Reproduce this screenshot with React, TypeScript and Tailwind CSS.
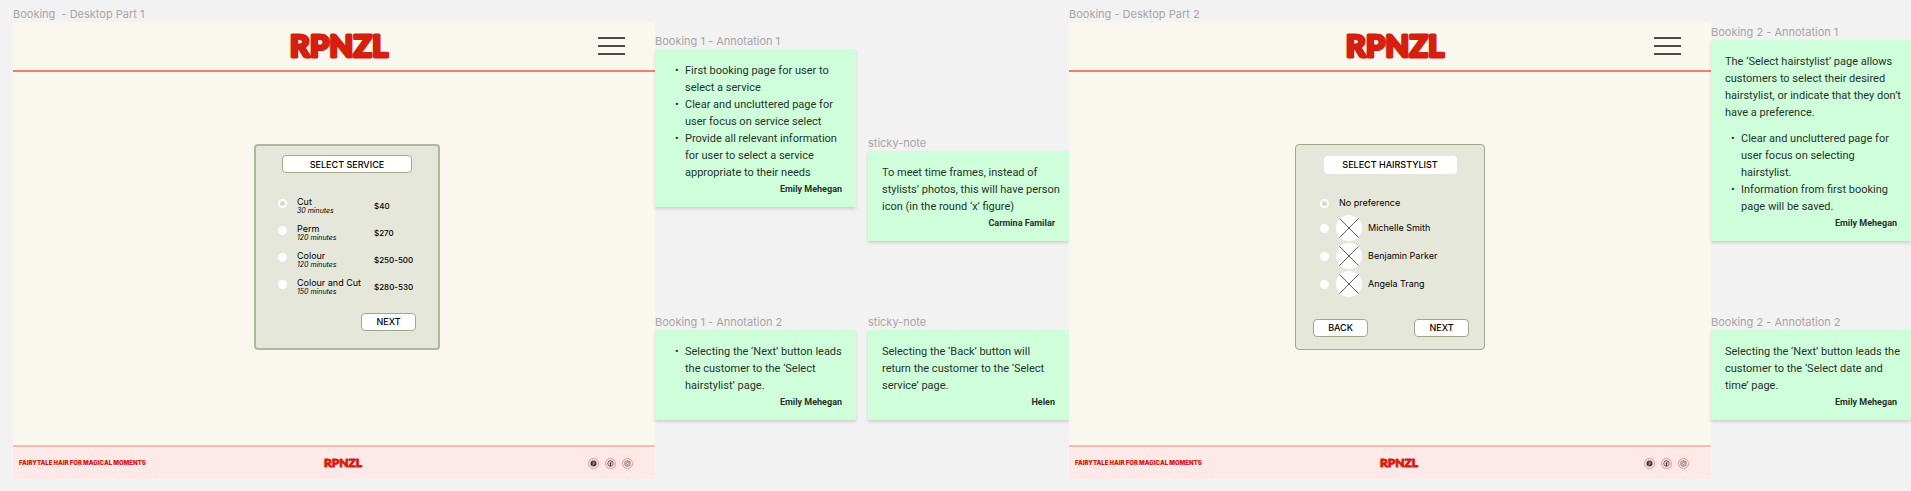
import type { ReactNode } from "react";

function Wordmark() {
  return (
    <svg viewBox="0 0 120 46" className="h-[46px] w-[120px]" role="img" aria-label="RPNZL">
      <text
        x="59"
        y="34"
        textAnchor="middle"
        fill="#d6200f"
        stroke="#d6200f"
        strokeWidth="3"
        strokeLinejoin="round"
        className="font-['Lato',sans-serif] text-[31px] font-black"
      >
        RPNZL
      </text>
    </svg>
  );
}

function SmallWordmark() {
  return (
    <svg viewBox="0 0 50 20" className="h-[20px] w-[50px]" role="img" aria-label="RPNZL">
      <text
        x="25"
        y="14"
        textAnchor="middle"
        fill="#d6200f"
        stroke="#d6200f"
        strokeWidth="1"
        strokeLinejoin="round"
        className="font-['Lato',sans-serif] text-[12px] font-black"
      >
        RPNZL
      </text>
    </svg>
  );
}

function SocialLink({ label, children }: { label: string; children: ReactNode }) {
  return (
    <a href="#" aria-label={label} className="block">
      <svg viewBox="0 0 22 22" className="size-[11px]" fill="none">
        <circle cx="11" cy="11" r="10" stroke="#e9806f" strokeWidth="1.6" />
        {children}
      </svg>
    </a>
  );
}

function Frame({ title, children }: { title: string; children: ReactNode }) {
  return (
    <section className="flex min-w-0 flex-col pt-[6px]">
      <h2 className="text-[11px] leading-4 whitespace-pre text-[#a6a6a6]">{title}</h2>
      <div className="flex flex-col bg-[#faf7ee]">
        <header className="grid h-[50px] grid-cols-[1fr_auto_1fr] items-center border-b-2 border-[#ec8370] pl-3">
          <span />
          <Wordmark />
          <button type="button" aria-label="Menu" className="mr-[30px] justify-self-end">
            <svg viewBox="0 0 27 18" className="h-[18px] w-[27px]" stroke="#111" strokeWidth="1.5">
              <path d="M0 1h27M0 9h27M0 17h27" />
            </svg>
          </button>
        </header>
        <div className="flex h-[373px] justify-center pt-[72px]">{children}</div>
        <footer className="grid h-[34px] grid-cols-[1fr_auto_1fr] items-center border-t-2 border-[#f6bdb0] bg-[#fde9e7]">
          <span className="pl-[6px] text-[6px] leading-4 font-black text-[#d6200f]">
            FAIRYTALE HAIR FOR MAGICAL MOMENTS
          </span>
          <div className="pl-[18px]">
            <SmallWordmark />
          </div>
          <div className="mr-[22px] flex gap-[6px] justify-self-end">
            <SocialLink label="Pinterest">
              <circle cx="11" cy="11" r="6" fill="#3c3232" />
              <path d="M9.5 16l2-7M8.5 11c-1-3 5-4 5-1 0 3-3 3-3 2" stroke="#fde9e7" strokeWidth="0.8" />
            </SocialLink>
            <SocialLink label="Facebook">
              <circle cx="11" cy="11" r="5.5" stroke="#3c3232" strokeWidth="1.6" />
              <path d="M11 16.5v-7q0-2 2.5-2M9 11.5h4" stroke="#3c3232" strokeWidth="1.8" />
            </SocialLink>
            <SocialLink label="Instagram">
              <rect x="6" y="6" width="10" height="10" rx="2.5" stroke="#5a4c4a" strokeWidth="1.5" />
              <circle cx="11" cy="11" r="2.4" stroke="#5a4c4a" strokeWidth="1.2" />
              <circle cx="14" cy="8" r="0.8" fill="#5a4c4a" />
            </SocialLink>
          </div>
        </footer>
      </div>
    </section>
  );
}

function Note({ label, author, children }: { label: string; author: string; children: ReactNode }) {
  return (
    <article>
      <h3 className="text-[11px] leading-4 whitespace-nowrap text-[#a6a6a6]">{label}</h3>
      <div className="bg-[#cfffda] pt-[13px] pr-[6px] pb-[9px] pl-[14px] font-['Roboto',sans-serif] text-[11px] leading-[17px] text-[#26332a] shadow-[0_2px_3px_rgba(0,0,0,0.14)]">
        {children}
        <p className="pr-[8px] text-right text-[9px] leading-[17px] font-bold">{author}</p>
      </div>
    </article>
  );
}

function Bullets({ items }: { items: string[] }) {
  return (
    <ul className="pr-[4px]">
      {items.map((item) => (
        <li key={item} className="flex">
          <span className="w-4 shrink-0 pl-[6px]">•</span>
          <span>{item}</span>
        </li>
      ))}
    </ul>
  );
}

const radioClass =
  "size-[9px] shrink-0 appearance-none rounded-full bg-white checked:border-2 checked:border-white checked:bg-[#d4d6cf]";

const buttonClass =
  "h-[18px] w-[55px] rounded-[4px] border border-[#a3a88a] bg-white text-[9px] leading-4 font-medium";

const services = [
  { name: "Cut", time: "30 minutes", price: "$40" },
  { name: "Perm", time: "120 minutes", price: "$270" },
  { name: "Colour", time: "120 minutes", price: "$250-500" },
  { name: "Colour and Cut", time: "150 minutes", price: "$280-530" },
];

function ServiceCard() {
  return (
    <form className="ml-[26px] flex h-[206px] w-[186px] flex-col rounded-[4px] border-2 border-[#b3b79d] bg-[#e4e7da] text-black">
      <h4 className="mx-auto mt-[9px] h-[18px] w-[130px] rounded-[4px] border border-[#a3a88a] bg-white text-center text-[9px] leading-[17px] font-medium">
        SELECT SERVICE
      </h4>
      <div className="mt-[24px] flex flex-col">
        {services.map((s, i) => (
          <label key={s.name} className="flex h-[27px] pl-[22px]">
            <input type="radio" name="service" defaultChecked={i === 0} className={"mt-[2px] " + radioClass} />
            <span className="ml-[10px] w-[77px] whitespace-nowrap">
              <span className="block text-[9px] leading-[10px]">{s.name}</span>
              <span className="block text-[7px] leading-[8px] italic">{s.time}</span>
            </span>
            <span className="mt-[4px] text-[8px] leading-[10px] font-medium">{s.price}</span>
          </label>
        ))}
      </div>
      <button type="button" className={"mt-[8px] mr-[22px] self-end " + buttonClass}>
        NEXT
      </button>
    </form>
  );
}

const stylists = ["Michelle Smith", "Benjamin Parker", "Angela Trang"];

function StylistCard() {
  return (
    <form className="flex h-[206px] w-[190px] flex-col rounded-[4px] border border-[#a3a88a] bg-[#e4e7da] text-black">
      <h4 className="mx-auto mt-[11px] h-[18px] w-[133px] rounded-[4px] bg-white text-center text-[9px] leading-[18px] font-medium">
        SELECT HAIRSTYLIST
      </h4>
      <label className="mt-[24px] flex h-[10px] items-center gap-[10px] pl-[24px] text-[9px] leading-[10px]">
        <input type="radio" name="stylist" defaultChecked className={radioClass} />
        No preference
      </label>
      <div className="mt-[7px] flex flex-col gap-[2px]">
        {stylists.map((name) => (
          <label key={name} className="flex items-center pl-[24px] text-[9px] leading-[10px]">
            <input type="radio" name="stylist" className={radioClass} />
            <svg viewBox="0 0 26 26" className="mr-[6px] ml-[7px] size-[26px]">
              <circle cx="13" cy="13" r="13" fill="white" />
              <path d="M3.5 3.5l19 19M22.5 3.5l-19 19" stroke="#333" strokeWidth="0.8" />
            </svg>
            {name}
          </label>
        ))}
      </div>
      <div className="mt-[22px] flex justify-between pr-[15px] pl-[17px]">
        <button type="button" className={buttonClass}>
          BACK
        </button>
        <button type="button" className={buttonClass}>
          NEXT
        </button>
      </div>
    </form>
  );
}

export default function App() {
  return (
    <main className="grid min-h-screen grid-cols-[642fr_414fr_642fr_200fr] items-start bg-[#f2f2f2] pl-[13px] font-['Inter',sans-serif]">
      <Frame title="Booking  - Desktop Part 1">
        <ServiceCard />
      </Frame>
      <div className="grid h-[420px] min-w-0 grid-cols-2 gap-3">
        <div className="flex flex-col justify-between pt-[33px]">
          <Note label="Booking 1 - Annotation 1" author="Emily Mehegan">
            <Bullets
              items={[
                "First booking page for user to select a service",
                "Clear and uncluttered page for user focus on service select",
                "Provide all relevant information for user to select a service appropriate to their needs",
              ]}
            />
          </Note>
          <Note label="Booking 1 - Annotation 2" author="Emily Mehegan">
            <Bullets items={["Selecting the ‘Next’ button leads the customer to the ‘Select hairstylist’ page."]} />
          </Note>
        </div>
        <div className="flex flex-col justify-between pt-[135px]">
          <Note label="sticky-note" author="Carmina Familar">
            <p>To meet time frames, instead of stylists’ photos, this will have person icon (in the round ‘x’ figure)</p>
          </Note>
          <Note label="sticky-note" author="Helen">
            <p className="pr-[8px]">
              Selecting the ‘Back’ button will return the customer to the ‘Select service’ page.
            </p>
          </Note>
        </div>
      </div>
      <Frame title="Booking - Desktop Part 2">
        <StylistCard />
      </Frame>
      <div className="flex h-[420px] min-w-0 flex-col justify-between pt-[24px]">
        <Note label="Booking 2 - Annotation 1" author="Emily Mehegan">
          <p className="mb-[9px]">
            The ‘Select hairstylist’ page allows customers to select their desired hairstylist, or indicate that they
            don’t have a preference.
          </p>
          <Bullets
            items={[
              "Clear and uncluttered page for user focus on selecting hairstylist.",
              "Information from first booking page will be saved.",
            ]}
          />
        </Note>
        <Note label="Booking 2 - Annotation 2" author="Emily Mehegan">
          <p>Selecting the ‘Next’ button leads the customer to the ‘Select date and time’ page.</p>
        </Note>
      </div>
    </main>
  );
}
